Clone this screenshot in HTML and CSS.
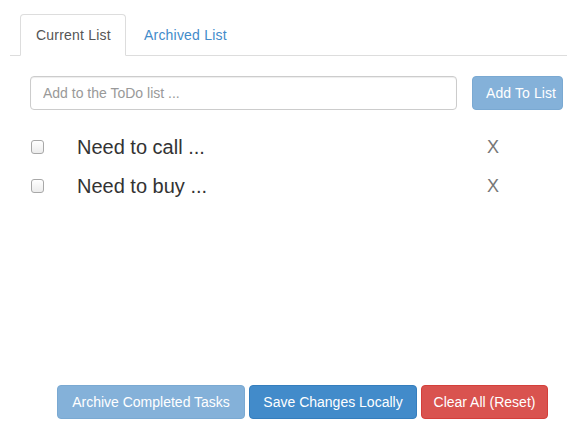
FILE: index.html
```html
<!DOCTYPE html>
<html>
<head>
<meta charset="utf-8">
<title>ToDo</title>
<link rel="stylesheet" href="styles.css">
</head>
<body>
<div class="app">
  <ul class="tabs">
    <li class="tab active"><a>Current List</a></li>
    <li class="tab"><a>Archived List</a></li>
  </ul>
  <div class="add-row">
    <input class="add-input" type="text" placeholder="Add to the ToDo list ...">
    <button class="btn btn-primary btn-faded btn-add">Add To List</button>
  </div>
  <ul class="items">
    <li class="item">
      <span class="check"></span>
      <span class="item-text">Need to call ...</span>
      <span class="remove">X</span>
    </li>
    <li class="item">
      <span class="check"></span>
      <span class="item-text">Need to buy ...</span>
      <span class="remove">X</span>
    </li>
  </ul>
  <div class="footer">
    <button class="btn btn-primary btn-faded btn-archive">Archive Completed Tasks</button>
    <button class="btn btn-primary btn-save">Save Changes Locally</button>
    <button class="btn btn-danger btn-clear">Clear All (Reset)</button>
  </div>
</div>
</body>
</html>
```

FILE: styles.css
```css
* { box-sizing: border-box; }
html, body { margin: 0; padding: 0; background: #fff; }
body {
  font-family: "Liberation Sans", Arial, Helvetica, sans-serif;
  font-size: 14px;
  line-height: 20px;
  color: #333;
  width: 577px;
  height: 438px;
  overflow: hidden;
}
.app { padding: 14px 10px 0 10px; }

.tabs {
  list-style: none;
  margin: 0;
  padding: 0 0 0 10px;
  display: flex;
  border-bottom: 1px solid #ddd;
}
.tab { margin-bottom: -1px; margin-right: 2px; }
.tab a {
  display: block;
  padding: 10px 15px;
  line-height: 20px;
  border: 1px solid transparent;
  border-radius: 4px 4px 0 0;
  color: #428bca;
  letter-spacing: 0.2px;
  white-space: nowrap;
}
.tab.active a {
  color: #555;
  background: #fff;
  border-color: #ddd #ddd transparent #ddd;
  width: 106px;
}

.add-row {
  display: flex;
  margin-top: 20px;
  padding-left: 20px;
  gap: 15px;
}
.add-input {
  width: 427px;
  height: 34px;
  padding: 6px 12px;
  border: 1px solid #ccc;
  border-radius: 4px;
  font-family: inherit;
  font-size: 14px;
  color: #555;
  box-shadow: inset 0 1px 1px rgba(0,0,0,.075);
  outline: none;
}
.add-input::placeholder { color: #999; }

.btn {
  display: inline-block;
  height: 34px;
  padding: 6px 0;
  font-family: inherit;
  font-size: 14px;
  line-height: 20px;
  border: 1px solid transparent;
  border-radius: 4px;
  color: #fff;
  white-space: nowrap;
  text-align: center;
  cursor: pointer;
}
.btn-primary { background: #428bca; border-color: #357ebd; }
.btn-faded { background: #84b1d9; border-color: #7aa9d2; }
.btn-danger { background: #d9534f; border-color: #d43f3a; }
.btn-add {
  width: 91px;
  padding-left: 13px;
  text-align: left;
  overflow: hidden;
  letter-spacing: 0.1px;
}
.btn-archive { width: 188px; }
.btn-save { width: 168px; }
.btn-clear { width: 127px; }

.items {
  list-style: none;
  margin: 17px 0 0 0;
  padding: 0 0 0 21px;
}
.item {
  display: flex;
  align-items: center;
  height: 39px;
}
.check {
  width: 13px;
  height: 14px;
  border: 1px solid #a8a8a8;
  border-radius: 3px;
  background: linear-gradient(#fff, #ececec);
  flex: none;
}
.item-text {
  margin-left: 33px;
  font-size: 20px;
  color: #333;
  width: 410px;
}
.remove {
  font-size: 18px;
  color: #777;
}

.footer {
  display: flex;
  justify-content: flex-end;
  gap: 4px;
  margin-top: 180px;
  padding-right: 19px;
}
```
